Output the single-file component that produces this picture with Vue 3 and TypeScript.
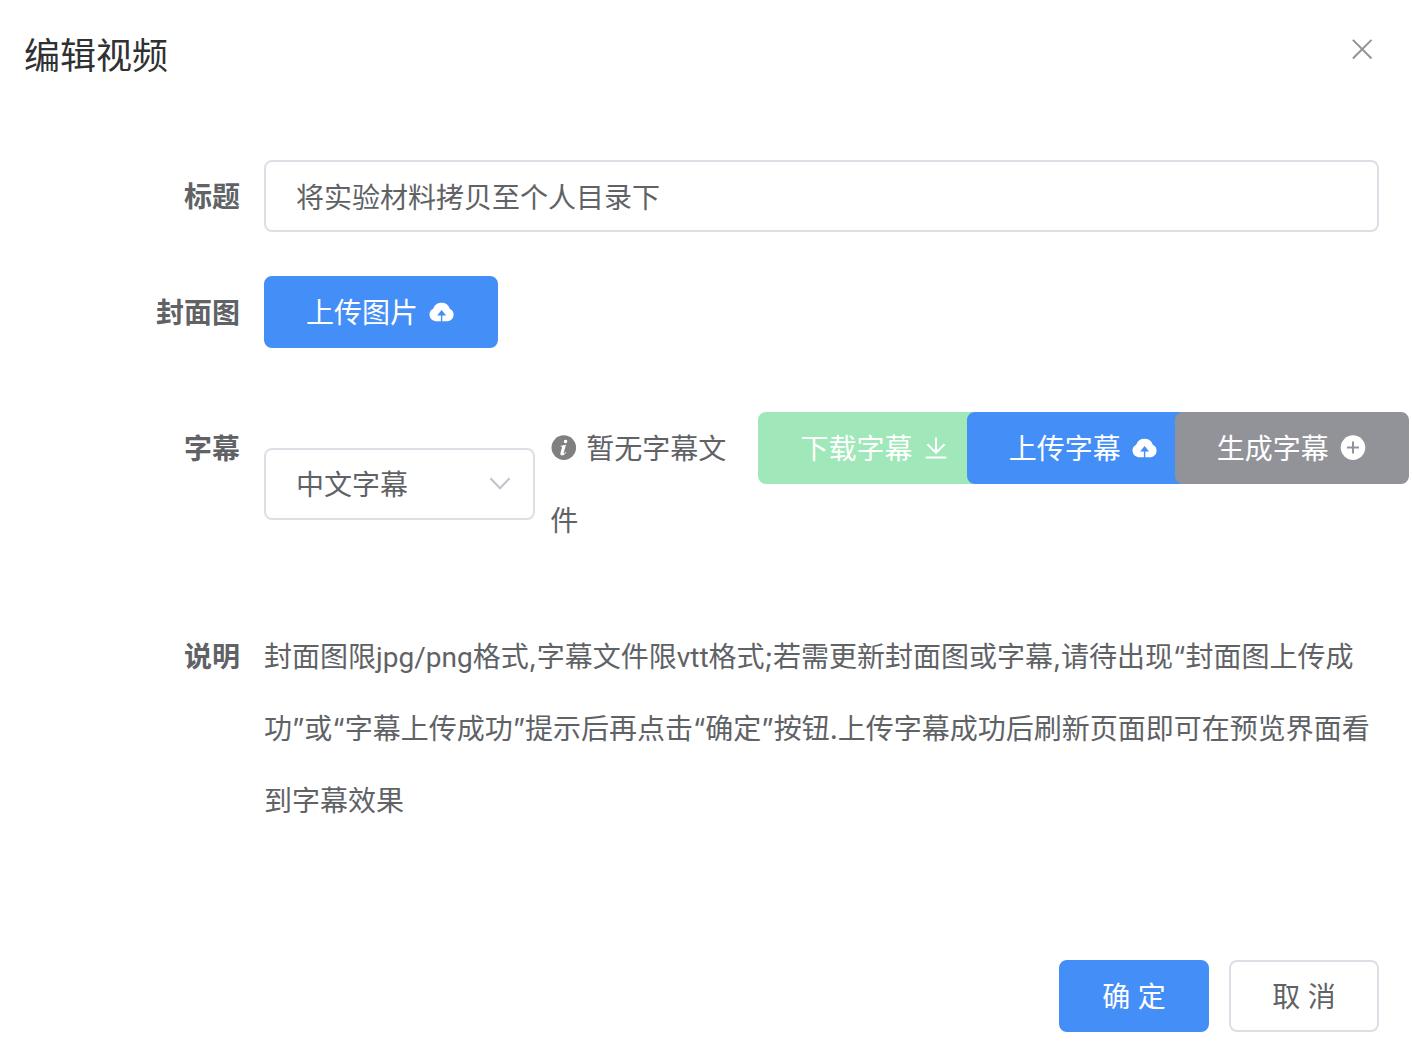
<script setup lang="ts">
import { ref } from 'vue'

const title = ref<string>('将实验材料拷贝至个人目录下')
const language = ref<string>('zh')
const languages: { value: string; label: string }[] = [{ value: 'zh', label: '中文字幕' }]
</script>

<template>
  <section class="dialog" role="dialog" aria-labelledby="dialog-title">
    <header class="header">
      <h1 id="dialog-title" class="title">编辑视频</h1>
      <button type="button" class="close" aria-label="关闭">
        <svg viewBox="0 0 32 32"><path d="M6.9 6.9 25.5 25.5M25.5 6.9 6.9 25.5" /></svg>
      </button>
    </header>

    <form class="form" @submit.prevent>
      <div class="row">
        <label class="label" for="video-title">标题</label>
        <input id="video-title" v-model="title" class="field" type="text" />
      </div>

      <div class="row cover">
        <span class="label">封面图</span>
        <div class="content">
          <button type="button" class="btn primary">
            上传图片
            <svg class="icon" viewBox="0 0 28 28">
              <path class="solid" d="M7.6 23.2A6.6 6.6 0 0 1 5.2 10.7 8.8 8.8 0 0 1 21.8 10.7 6.6 6.6 0 0 1 20 23.2H14.3V17.6H18.1L13.6 12 9.1 17.6H12.9V23.2Z" />
            </svg>
          </button>
        </div>
      </div>

      <div class="row">
        <label class="label" for="subtitle-language">字幕</label>
        <div class="content subtitles">
          <div class="picker">
            <select id="subtitle-language" v-model="language" class="field">
              <option v-for="item in languages" :key="item.value" :value="item.value">{{ item.label }}</option>
            </select>
            <svg class="arrow" viewBox="0 0 28 28"><path d="M4.4 8.2 14 18.2 23.6 8.2" /></svg>
          </div>
          <p class="status">
            <svg class="icon info" viewBox="0 0 28 28">
              <circle class="disc" cx="13.8" cy="13.6" r="12.3" />
              <path class="glyph" d="M15.7 5.8a1.7 1.7 0 1 1-.7 3.3 1.7 1.7 0 0 1 .7-3.3ZM10.8 11.8 16 10.8 13.7 18.8c-.2.9.2 1 .7.6l1.3-1.3.6.5c-1.2 1.6-2.4 2.8-4.2 2.8-1.5 0-2-1-1.6-2.6l1.5-5.2c.2-.8 0-1-1.4-1Z" />
            </svg>暂无字幕文件
          </p>
          <div>
            <button type="button" class="btn success" disabled>
              下载字幕
              <svg class="icon" viewBox="0 0 28 28">
                <path class="line" d="M14 3.4V18.6M5.4 10.2 14 18.8 22.6 10.2M3.7 23.5H24.3" />
              </svg>
            </button>
          </div>
          <div>
            <button type="button" class="btn primary">
              上传字幕
              <svg class="icon" viewBox="0 0 28 28">
                <path class="solid" d="M7.6 23.2A6.6 6.6 0 0 1 5.2 10.7 8.8 8.8 0 0 1 21.8 10.7 6.6 6.6 0 0 1 20 23.2H14.3V17.6H18.1L13.6 12 9.1 17.6H12.9V23.2Z" />
              </svg>
            </button>
          </div>
          <div>
            <button type="button" class="btn neutral">
              生成字幕
              <svg class="icon" viewBox="0 0 28 28">
                <circle class="solid" cx="14" cy="13.6" r="12.3" />
                <path class="plus" d="M14 7.6V19.6M8 13.6H20" />
              </svg>
            </button>
          </div>
        </div>
      </div>

      <div class="row">
        <span class="label">说明</span>
        <p class="content"><span class="hint">封面图限<span class="format">jpg/png</span>格式,字幕文件限<span class="format">vtt</span>格式;若需更新封面图或字幕,请待出现“封面图上传成功”或“字幕上传成功”提示后再点击“确定”按钮.上传字幕成功后刷新页面即可在预览界面看到字幕效果</span></p>
      </div>
    </form>

    <footer class="footer">
      <button type="button" class="btn primary action">确 定</button>
      <button type="button" class="btn plain action">取 消</button>
    </footer>
  </section>
</template>

<style>
body {
  margin: 0;
  background: #fff;
}
</style>

<style scoped>
.dialog {
  box-sizing: border-box;
  padding: 32px 33px 24px 24px;
  overflow: hidden;
  color: #606266;
  font-family: 'Noto Sans', 'Noto Sans CJK SC', sans-serif;
  font-size: 28px;
  line-height: 72px;
}

.header {
  display: flex;
  justify-content: space-between;
  align-items: flex-start;
}

.title {
  margin: 0;
  color: #303133;
  font-size: 36px;
  font-weight: 400;
  line-height: 48px;
}

.close {
  width: 34px;
  height: 34px;
  padding: 1px;
  border: 0;
  background: none;
  cursor: pointer;
}

.close svg {
  display: block;
  width: 32px;
  height: 32px;
  fill: none;
  stroke: #909399;
  stroke-width: 2;
}

.form {
  display: flex;
  flex-direction: column;
  gap: 64px;
  margin-top: 80px;
}

.row {
  display: flex;
  align-items: flex-start;
}

.cover {
  margin-top: -20px;
}

.label {
  box-sizing: border-box;
  flex: 0 0 240px;
  padding-right: 24px;
  font-weight: 700;
  text-align: right;
}

.content {
  flex: 1;
  min-width: 0;
  margin: 0;
}

.hint {
  font-family: Inter, 'Noto Sans CJK SC', sans-serif;
  line-height: 40px;
}

.format {
  font-family: Roboto, sans-serif;
}

.field {
  box-sizing: border-box;
  display: block;
  flex: 1;
  width: 100%;
  min-width: 0;
  height: 72px;
  margin: 0;
  padding: 0 30px;
  border: 2px solid #dcdfe6;
  border-radius: 8px;
  outline: 0;
  background: #fff;
  color: #606266;
  font: inherit;
  line-height: 40px;
  appearance: none;
}

.subtitles {
  display: grid;
  grid-template-columns: 11fr repeat(4, 8fr);
  margin-right: -4px;
}

.subtitles > * {
  min-width: 0;
}

.picker {
  position: relative;
  height: 72px;
  margin: 36px 15px 0 0;
}

.arrow {
  position: absolute;
  top: 22px;
  right: 21px;
  width: 28px;
  height: 28px;
  fill: none;
  stroke: #c0c4cc;
  stroke-width: 2;
  pointer-events: none;
}

.status {
  margin: 0;
  padding-right: 16px;
}

.icon {
  flex: none;
  width: 28px;
  height: 28px;
}

.info {
  margin-right: 8px;
  vertical-align: -3px;
}

.disc {
  fill: #808080;
}

.glyph,
.solid {
  fill: #fff;
}

.line {
  fill: none;
  stroke: #fff;
  stroke-width: 2;
}

.plus {
  fill: none;
  stroke: #909399;
  stroke-width: 2;
}

.btn {
  box-sizing: border-box;
  display: inline-flex;
  justify-content: center;
  align-items: center;
  gap: 10px;
  height: 72px;
  padding: 0 40px;
  border: 2px solid transparent;
  border-radius: 8px;
  color: #fff;
  font: inherit;
  line-height: 40px;
  white-space: nowrap;
  vertical-align: top;
  cursor: pointer;
}

.subtitles .btn {
  position: relative;
}

.primary {
  border-color: #448ef7;
  background: #448ef7;
}

.success {
  border-color: #a0e7ba;
  background: #a0e7ba;
}

.neutral {
  border-color: #929399;
  background: #929399;
}

.plain {
  border-color: #dcdfe6;
  background: #fff;
  color: #606266;
}

.footer {
  display: flex;
  justify-content: flex-end;
  gap: 20px;
  margin-top: 124px;
}

.action {
  min-width: 150px;
}
</style>
